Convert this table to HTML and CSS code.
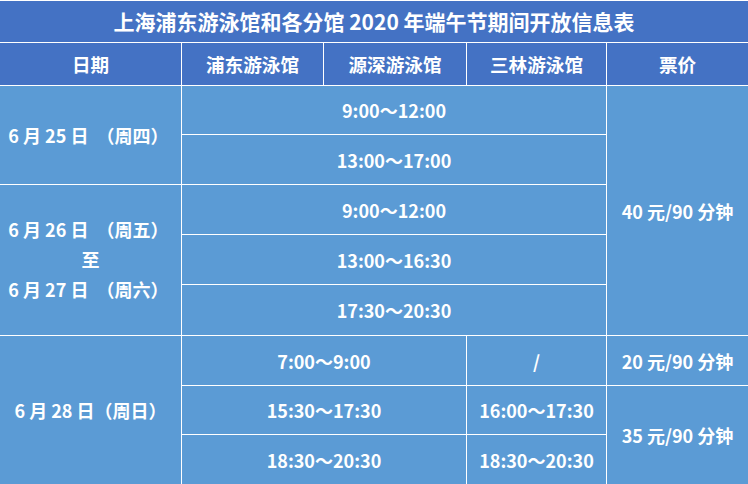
FILE: index.html
```html
<!DOCTYPE html>
<html lang="zh-CN">
<head>
<meta charset="utf-8">
<title>端午节期间开放信息表</title>
<link rel="stylesheet" href="styles.css">
</head>
<body>
<div class="table">
  <div class="cell title">上海浦东游泳馆和各分馆 2020 年端午节期间开放信息表</div>

  <div class="cell head">日期</div>
  <div class="cell head">浦东游泳馆</div>
  <div class="cell head">源深游泳馆</div>
  <div class="cell head">三林游泳馆</div>
  <div class="cell head">票价</div>

  <div class="cell date d1">6 月 25 日 &nbsp;（周四）&nbsp;</div>
  <div class="cell span3 r3">9:00～12:00</div>
  <div class="cell price p1">40 元/90 分钟</div>
  <div class="cell span3 r4">13:00～17:00</div>

  <div class="cell date d2"><span>6 月 26 日 &nbsp;（周五）&nbsp;</span><span>至</span><span>6 月 27 日 &nbsp;（周六）&nbsp;</span></div>
  <div class="cell span3 r5">9:00～12:00</div>
  <div class="cell span3 r6">13:00～16:30</div>
  <div class="cell span3 r7">17:30～20:30</div>

  <div class="cell date d3">6 月 28 日（周日）</div>
  <div class="cell span2 r8">7:00～9:00</div>
  <div class="cell c4 r8">/</div>
  <div class="cell c5 r8">20 元/90 分钟</div>
  <div class="cell span2 r9">15:30～17:30</div>
  <div class="cell c4 r9">16:00～17:30</div>
  <div class="cell price p2">35 元/90 分钟</div>
  <div class="cell span2 r10">18:30～20:30</div>
  <div class="cell c4 r10">18:30～20:30</div>
</div>
</body>
</html>
```

FILE: styles.css
```css
html, body {
  margin: 0;
  padding: 0;
  background: #ffffff;
}

.table {
  width: 748px;
  height: 484px;
  box-sizing: border-box;
  padding-top: 1px;
  background: #ffffff;
  display: grid;
  grid-template-columns: 181px 141px 142px 139px 141px;
  grid-template-rows: 41px 42px 48px 49px 49px 49px 50px 49px 48px 49px;
  gap: 1px;
  font-family: "Noto Sans CJK SC", "Noto Sans", sans-serif;
  font-weight: 700;
  color: #ffffff;
}

.cell {
  background: #5b9bd5;
  display: flex;
  align-items: center;
  justify-content: center;
  font-size: 18px;
  line-height: 1;
  white-space: nowrap;
}

.title {
  grid-column: 1 / -1;
  background: #4472c4;
  font-size: 21px;
}

.head {
  background: #4472c4;
  font-size: 18.6px;
}

.date { grid-column: 1; }
.d1 { grid-row: 3 / 5; }
.d2 {
  grid-row: 5 / 8;
  flex-direction: column;
  line-height: 30px;
  padding-bottom: 3px;
}
.d3 { grid-row: 8 / 11; }

.span3 { grid-column: 2 / 5; }
.span2 { grid-column: 2 / 4; }
.c4 { grid-column: 4; }
.c5 { grid-column: 5; }

.r3 { grid-row: 3; }
.r4 { grid-row: 4; }
.r5 { grid-row: 5; }
.r6 { grid-row: 6; }
.r7 { grid-row: 7; }
.r8 { grid-row: 8; }
.r9 { grid-row: 9; }
.r10 { grid-row: 10; }

.price { grid-column: 5; }
.p1 { grid-row: 3 / 8; }
.p2 { grid-row: 9 / 11; }
```
